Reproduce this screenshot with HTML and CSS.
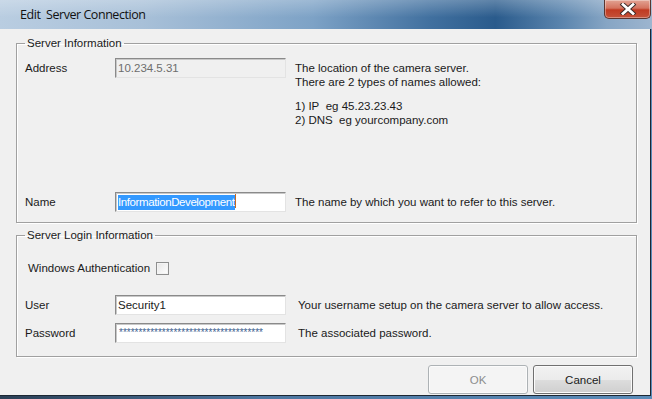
FILE: index.html
```html
<!DOCTYPE html>
<html lang="en">
<head>
    <meta charset="UTF-8">
    <title>Edit Server Connection</title>
    <link rel="stylesheet" href="styles.css">
</head>
<body>

<div class="window">
    <div class="titlebar">
        <span class="title">Edit  Server Connection</span>
        <div class="close-btn">
            <svg width="20" height="12" viewBox="0 0 20 12">
                <path d="M5 1.5 L15 10.5 M15 1.5 L5 10.5" stroke="#3a2a28" stroke-width="4.6" stroke-linecap="square"/>
                <path d="M5 1.5 L15 10.5 M15 1.5 L5 10.5" stroke="#ffffff" stroke-width="2.8" stroke-linecap="square"/>
            </svg>
        </div>
    </div>

    <div class="client">
        <!-- Server Information -->
        <fieldset class="group group-server">
            <legend>Server Information</legend>

            <div class="row row-address">
                <span class="label">Address</span>
                <div class="textbox disabled">10.234.5.31</div>
                <div class="desc">
                    <p>The location of the camera server.<br>There are 2 types of names allowed:</p>
                    <p class="para">1) IP&nbsp; eg 45.23.23.43<br>2) DNS&nbsp; eg yourcompany.com</p>
                </div>
            </div>

            <div class="row">
                <span class="label">Name</span>
                <div class="textbox"><span class="selected">InformationDevelopment</span><span class="caret"></span></div>
                <div class="desc">The name by which you want to refer to this server.</div>
            </div>
        </fieldset>

        <!-- Server Login Information -->
        <fieldset class="group group-login">
            <legend>Server Login Information</legend>

            <div class="check-row">
                <span>Windows Authentication</span>
                <span class="checkbox"></span>
            </div>

            <div class="row row-user">
                <span class="label">User</span>
                <div class="textbox">Security1</div>
                <div class="desc desc-wide">Your username setup on the camera server to allow access.</div>
            </div>

            <div class="row row-password">
                <span class="label">Password</span>
                <div class="textbox password">*************************************</div>
                <div class="desc desc-wide">The associated password.</div>
            </div>
        </fieldset>

        <div class="buttons">
            <button class="btn" disabled>OK</button>
            <button class="btn">Cancel</button>
        </div>
    </div>
</div>

</body>
</html>
```

FILE: styles.css
```css
* {
    box-sizing: border-box;
    margin: 0;
    padding: 0;
}

body {
    background: #ffffff;
    font-family: 'Liberation Sans', Arial, sans-serif;
    font-size: 11.5px;
    color: #1a1a1a;
}

.window {
    width: 652px;
    height: 399px;
    background: linear-gradient(90deg, #2b3f55, #4d76a0 40%, #5a8bb8);
    overflow: hidden;
}

/* title bar */
.titlebar {
    height: 29px;
    display: flex;
    align-items: flex-start;
    justify-content: space-between;
    background:
        linear-gradient(180deg, rgba(255,255,255,0.25), rgba(255,255,255,0) 60%),
        linear-gradient(90deg, #b9cde1 0%, #a8c0d8 22%, #7da2c6 48%, #41709f 66%, #2a5b8c 76%, #5a84ad 86%, #86a5c4 93%, #9db5cf 100%);
}

.title {
    white-space: pre;
    font-family: 'Open Sans', sans-serif;
    font-size: 12.5px;
    color: #111;
    margin: 6px 0 0 20px;
    letter-spacing: -0.45px;
}

.close-btn {
    width: 47px;
    height: 19px;
    margin-right: 1px;
    display: flex;
    align-items: center;
    justify-content: center;
    border: 1px solid #5a3530;
    border-top: none;
    border-radius: 0 0 5px 5px;
    background: linear-gradient(180deg, #e2a394 0%, #d4735f 45%, #c03a22 55%, #c4523a 100%);
    box-shadow: inset 0 0 0 1px rgba(255,255,255,0.35);
}

/* client area */
.client {
    width: 651px;
    height: 367px;
    background: #f0f0f0;
    border-right: 1px solid #1c2733;
    border-bottom: 1px solid #1c2733;
    padding: 7px 14px 0 16px;
}

.group {
    border: 1px solid #a0a0a0;
    box-shadow: inset 1px 1px 0 #ffffff, 1px 1px 0 #ffffff;
    padding: 0 8px;
    width: 621px;
}

.group legend {
    padding: 0 2px;
    line-height: 14px;
}

.group-server {
    padding-top: 8px;
    padding-bottom: 10px;
}

.group-login {
    margin-top: 5px;
    padding-bottom: 13px;
}

.row {
    display: flex;
    align-items: flex-start;
}

.row-address {
    min-height: 134px;
}

.label {
    width: 90px;
    line-height: 20px;
}

.textbox {
    width: 171px;
    height: 20px;
    line-height: 18px;
    padding-left: 2px;
    background: #ffffff;
    border: 1px solid;
    border-color: #8a8a8a #e3e3e3 #e3e3e3 #8a8a8a;
    box-shadow: inset 1px 1px 0 #c8c8c8;
    white-space: nowrap;
    overflow: hidden;
}

.textbox.disabled {
    background: #f0f0f0;
    color: #6d6d6d;
}

.selected {
    background: #3399ff;
    color: #ffffff;
    display: inline-block;
    line-height: 15px;
    letter-spacing: -0.4px;
}

.caret {
    display: inline-block;
    width: 1px;
    height: 14px;
    background: #c8681f;
    vertical-align: -2px;
}

.password {
    font-size: 10px;
    color: #3d5f8f;
    padding-left: 3px;
}

.desc {
    margin-left: 9px;
    padding-top: 3px;
    line-height: 14px;
}

.desc-wide {
    margin-left: 12px;
}

.para {
    margin-top: 10px;
}

.check-row {
    margin-top: 19px;
    margin-left: 3px;
    height: 14px;
    display: flex;
    align-items: center;
    gap: 6px;
}

.checkbox {
    width: 13px;
    height: 13px;
    border: 1px solid #8e8f8f;
    background: linear-gradient(135deg, #e6e6e6, #ffffff);
    box-shadow: inset 0 0 0 1px #f4f4f4;
}

.row-user {
    margin-top: 20px;
}

.row-password {
    margin-top: 8px;
}

.buttons {
    display: flex;
    justify-content: flex-end;
    gap: 5px;
    margin-top: 8px;
    padding-right: 3px;
}

.btn {
    width: 100px;
    height: 29px;
    font-family: 'Liberation Sans', Arial, sans-serif;
    font-size: 11.5px;
    color: #1a1a1a;
    border: 1px solid #707070;
    border-radius: 3px;
    background: linear-gradient(180deg, #f2f2f2 0%, #ebebeb 50%, #dddddd 51%, #cfcfcf 100%);
    box-shadow: inset 0 0 0 1px #fbfbfb;
}

.btn:disabled {
    color: #8d8d8d;
    border-color: #adb2b5;
    background: #f4f4f4;
}
```
